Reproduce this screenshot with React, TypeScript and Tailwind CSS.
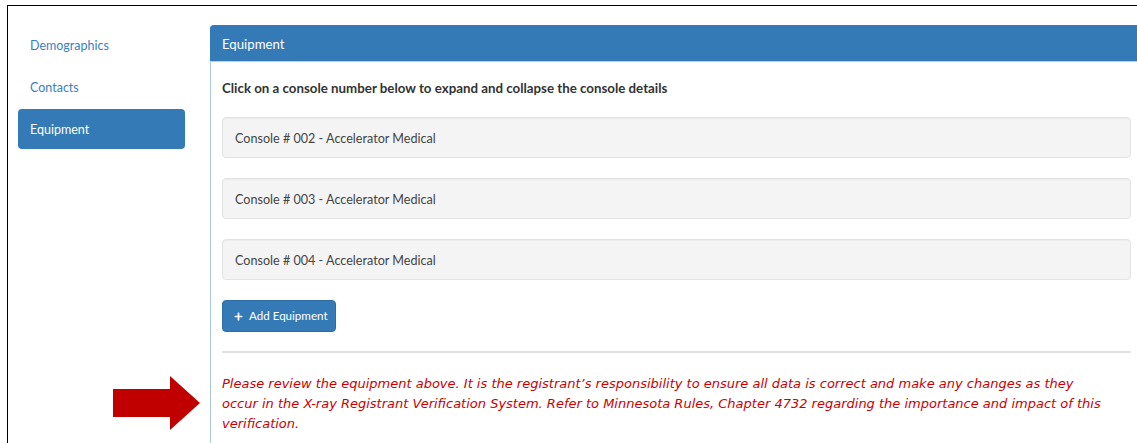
import { FaPlus } from "react-icons/fa";

const font = { fontFamily: "Lato, 'DejaVu Sans', sans-serif" };

const navItems = ["Demographics", "Contacts", "Equipment"];
const consoles = ["002", "003", "004"];

function SideNav({ active }: { active: string }) {
    return (
        <ul className="w-[167px] shrink-0 flex flex-col gap-[2px]">
            {navItems.map((item) => (
                <li
                    key={item}
                    className={`h-[40px] flex items-center px-[12px] pt-[3px] rounded-[4px] text-[12.5px] ${
                        item === active
                            ? "bg-[#337ab7] text-white"
                            : "text-[#3a7fbf]"
                    }`}
                >
                    {item}
                </li>
            ))}
        </ul>
    );
}

function ConsoleRow({ id }: { id: string }) {
    return (
        <div className="h-[41px] flex items-center px-[12px] pt-[3px] bg-[#f4f4f4] border border-[#e3e3e3] rounded-[4px] text-[12.6px] text-[#444] shadow-[inset_0_1px_1px_rgba(0,0,0,0.04)]">
            Console # {id} - Accelerator Medical
        </div>
    );
}

// red call-out arrow pointing at the notice
function Arrow() {
    return (
        <svg
            className="absolute left-[113px] top-[376px]"
            width="88"
            height="55"
            viewBox="0 0 88 55"
        >
            <path
                d="M0 13 H57 V0 L87 27 L57 54 V41 H0 Z"
                fill="#c00000"
                strokeLinejoin="round"
            />
        </svg>
    );
}

export default function App() {
    return (
        <div
            className="w-[1137px] h-[443px] overflow-hidden bg-white relative"
            style={font}
        >
            <div className="ml-[7px] mt-[5px] h-[500px] w-[1200px] border-t border-l border-black flex pt-[19px] pl-[10px]">
                <SideNav active="Equipment" />
                <div className="ml-[25px] w-[934px] shrink-0 border border-[#a9c6e2] rounded-t-[4px] h-[480px]">
                    <div className="h-[37px] -mt-px -mx-px bg-[#337ab7] rounded-t-[4px] border-b border-[#b5d0ea] flex items-center px-[12px] pt-[3px] text-[13.2px] text-white">
                        Equipment
                    </div>
                    <div className="px-[11px] pr-[12px]">
                        <p className="mt-[17px] h-[18px] leading-[18px] text-[13.3px] font-bold text-[#333]">
                            Click on a console number below to expand and
                            collapse the console details
                        </p>
                        <div className="mt-[20px] flex flex-col gap-[20px]">
                            {consoles.map((c) => (
                                <ConsoleRow key={c} id={c} />
                            ))}
                        </div>
                        <button className="mt-[20px] h-[32px] w-[114px] flex items-center gap-[6px] px-[11px] whitespace-nowrap bg-[#337ab7] border border-[#2e6da4] rounded-[4px] text-white text-[11.6px]">
                            <FaPlus className="w-[9px] h-[9px] shrink-0" />
                            Add Equipment
                        </button>
                        <div className="mt-[19px] h-[2px] bg-[#e2e2e2]" />
                        <p
                            className="mt-[21px] italic text-[13px] leading-[20px] text-[#cc0000] whitespace-nowrap"
                            style={{ fontFamily: "'DejaVu Sans', sans-serif" }}
                        >
                            Please review the equipment above. It is the
                            registrant’s responsibility to ensure all data is
                            correct and make any changes as they
                            <br />
                            occur in the X-ray Registrant Verification System.
                            Refer to Minnesota Rules, Chapter 4732 regarding the
                            importance and impact of this
                            <br />
                            verification.
                        </p>
                    </div>
                </div>
            </div>
            <Arrow />
        </div>
    );
}
